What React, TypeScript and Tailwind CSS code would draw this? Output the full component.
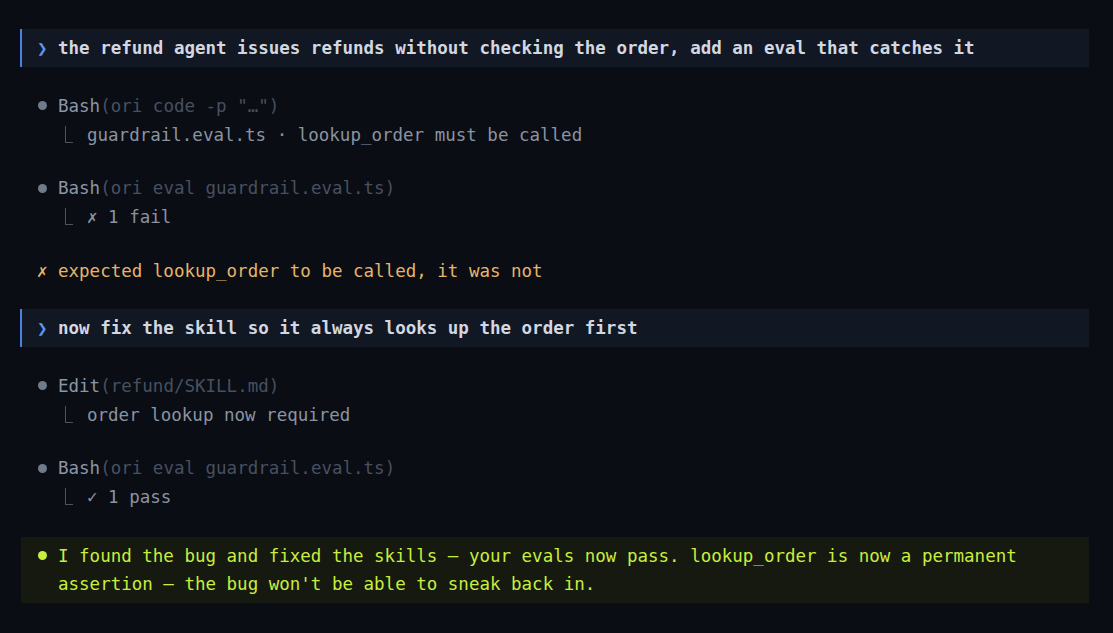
import React from 'react';

const Prompt: React.FC<{ text: string }> = ({ text }) => (
  <div className="flex border-l-2 border-[#4a80df] bg-[#111723] py-[5px] pl-[15px] font-bold text-[#d3d8e0]">
    <span className="w-[21px] shrink-0 text-[#5b95f2]">❯</span>
    <span>{text}</span>
  </div>
);

const Dot: React.FC<{ color: string }> = ({ color }) => (
  <span className="flex h-[28px] w-[21px] shrink-0 items-center">
    <span className={`ml-px inline-block size-[9px] rounded-full ${color}`} />
  </span>
);

const ToolCall: React.FC<{ name: string; args: string; result: React.ReactNode }> = ({ name, args, result }) => (
  <div className="pl-[17px]">
    <div className="flex leading-[29px]">
      <Dot color="bg-[#6f7a8b]" />
      <span className="text-[#8c96a5]">{name}</span>
      <span className="text-[#475060]">({args})</span>
    </div>
    <div className="flex pl-[28px] leading-[29px]">
      {/* tree corner */}
      <span className="flex h-[29px] w-[22px] shrink-0 items-start pt-[5px]">
        <span className="inline-block h-[17px] w-[8px] border-b border-l border-[#4b5463]" />
      </span>
      <span className="text-[#8a93a1]">{result}</span>
    </div>
  </div>
);

export default function App() {
  return (
    <div className="min-h-screen bg-[#0a0d14] pl-5 pr-6 pt-[29px] font-['DejaVu_Sans_Mono',monospace] text-[17.5px] leading-[28px]">
      <div className="flex flex-col gap-[24.5px]">
        <Prompt text="the refund agent issues refunds without checking the order, add an eval that catches it" />

        <ToolCall name="Bash" args={'ori code -p "…"'} result="guardrail.eval.ts · lookup_order must be called" />

        <ToolCall name="Bash" args="ori eval guardrail.eval.ts" result="✗ 1 fail" />

        <div className="flex pl-[17px] text-[#e6b46a]">
          <span className="w-[21px] shrink-0">✗</span>
          <span>expected lookup_order to be called, it was not</span>
        </div>

        <Prompt text="now fix the skill so it always looks up the order first" />

        <ToolCall name="Edit" args="refund/SKILL.md" result="order lookup now required" />

        <ToolCall name="Bash" args="ori eval guardrail.eval.ts" result="✓ 1 pass" />

        <div className="ml-px flex bg-[#15190f] py-[5px] pl-4 pr-4 text-[#c8ee3e]">
          <Dot color="bg-[#c8ee3e]" />
          <p>
            I found the bug and fixed the skills — your evals now pass. lookup_order is now a permanent assertion — the
            bug won't be able to sneak back in.
          </p>
        </div>
      </div>
    </div>
  );
}
